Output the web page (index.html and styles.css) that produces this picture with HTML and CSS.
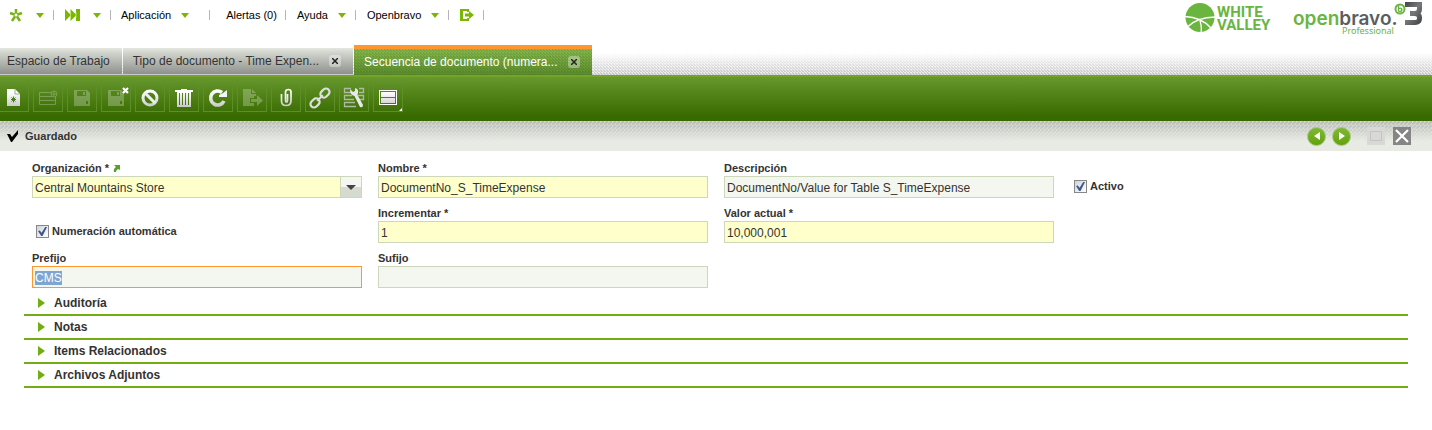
FILE: index.html
```html
<!DOCTYPE html>
<html lang="es">
<head>
  <meta charset="UTF-8" />
  <meta name="viewport" content="width=device-width, initial-scale=1.0"/>
  <title>Secuencia de documento - Openbravo</title>
  <link rel="stylesheet" href="styles.css">
</head>
<body>

  <svg class="defs" width="0" height="0" aria-hidden="true">
    <defs>
      <linearGradient id="metal" gradientUnits="userSpaceOnUse" x1="0" y1="1" x2="0" y2="21">
        <stop offset="0.2" stop-color="#ffffff"/>
        <stop offset="1" stop-color="#c4c4c4"/>
      </linearGradient>
      <linearGradient id="tres" x1="0" y1="0" x2="1" y2="1">
        <stop offset="0" stop-color="#4a4b4d"/>
        <stop offset="0.5" stop-color="#77787a"/>
        <stop offset="1" stop-color="#4a4b4d"/>
      </linearGradient>
    </defs>
  </svg>

  <header class="header">
    <nav class="menu">
      <button class="menu-item menu-item-icon" aria-label="Crear nuevo">
        <svg class="menu-icon" width="14" height="14" viewBox="0 0 14 14"><path d="M7 7V1M7 7L1 5M7 7L13 5M7 7L3 13M7 7L11 13" stroke="#7ab317" stroke-width="2.6" fill="none"/><circle cx="7" cy="7" r="1.500" fill="#fff"/></svg>
        <span class="arrow"></span>
      </button>
      <button class="menu-item menu-item-icon" aria-label="Inicio rápido">
        <svg class="menu-icon" width="15" height="14" viewBox="0 0 15 14"><path d="M0 1L5.500 6.500V1L11 6.500V1H15V13H11V7.500L5.500 13V7.500L0 13Z" fill="#7ab800"/><path d="M5.500 4V10M11 4V10" stroke="#cbe29a" stroke-width=".7"/></svg>
        <span class="arrow"></span>
      </button>
      <button class="menu-item menu-item-app">Aplicación <span class="arrow"></span></button>
      <button class="menu-item menu-item-alert">Alertas (0)</button>
      <button class="menu-item">Ayuda <span class="arrow"></span></button>
      <button class="menu-item">Openbravo <span class="arrow"></span></button>
      <button class="menu-item" aria-label="Salir">
        <svg class="menu-icon" width="14" height="14" viewBox="0 0 14 14"><path d="M0 1H9V4H7V3H3V11H7V10H9V13H0Z" fill="#7ab800"/><path d="M5 5.500H9V3L14 7L9 11V8.500H5Z" fill="#7ab800"/></svg>
      </button>
    </nav>

    <div class="logos">
      <svg width="86" height="34" viewBox="0 0 86 34" role="img" aria-label="White Valley">
        <circle cx="15" cy="17.500" r="14.500" fill="#69b53f"/>
        <path d="M0 16.500Q16 17 26 28M3 26.500Q12 17.500 30 17M15 21Q17 27 16 32" stroke="#fff" stroke-width="1.300" fill="none"/>
        <text class="logo-valley" x="32" y="17">WHITE</text>
        <text class="logo-valley" x="32" y="30">VALLEY</text>
      </svg>
      <svg width="132" height="36" viewBox="0 0 132 36" role="img" aria-label="Openbravo 3 Professional">
        <text class="logo-open" x="0" y="25">open<tspan class="logo-bravo">bravo.</tspan></text>
        <text class="logo-pro" x="49" y="34">Professional</text>
        <circle cx="107" cy="9" r="4.500" fill="none" stroke="#69b53f" stroke-width="2"/>
        <path d="M105.500 4V10.500Q106 12 107.500 11.500Q109.500 10.500 108.500 8.500Q107 7.500 105.500 9" fill="none" stroke="#69b53f" stroke-width="1.400"/>
        <path d="M112 4.500H126.500V9Q126.500 13 122 13.500H117M122 13.500Q126.500 14 126.500 17.500V18.500Q126.500 22.500 122 22.500H112" fill="none" stroke="url(#tres)" stroke-width="5"/>
      </svg>
    </div>
  </header>

  <div class="tabs">
    <button class="tab tab-home">Espacio de Trabajo</button>
    <div class="tab"><span>Tipo de documento - Time Expen...</span><button class="tab-close" aria-label="Cerrar"><svg width="6" height="6" viewBox="0 0 6 6"><path d="M0 0L6 6M6 0L0 6"/></svg></button></div>
    <div class="tab active"><span>Secuencia de documento (numera...</span><button class="tab-close" aria-label="Cerrar"><svg width="6" height="6" viewBox="0 0 6 6"><path d="M0 0L6 6M6 0L0 6"/></svg></button></div>
  </div>

  <div class="toolbar">
    <button class="tool" aria-label="Nuevo"><svg width="22" height="22" viewBox="0 0 22 22"><path d="M4 2H12L17 7V19H4Z" fill="url(#metal)"/><path d="M12 2V7H17" stroke="#99ad85" fill="none"/><path d="M10.500 9.500V15.500M8 12.500H13M8.500 14.500L12.500 10.500M8.500 10.500L12.500 14.500" stroke="#4b7d16" stroke-width="1"/></svg></button>
    <button class="tool disabled" aria-label="Nuevo en cuadrícula" disabled><svg width="22" height="22" viewBox="0 0 22 22"><path d="M14 5.500H2.500V17.500H18.500V10M2.500 9.500H15M2.500 13.500H18.500" stroke="#fff" fill="none"/><circle cx="17" cy="7" r="3" stroke="#fff" fill="none"/><path d="M17 5V9M15 7H19" stroke="#fff"/></svg></button>
    <button class="tool disabled" aria-label="Guardar" disabled><svg width="22" height="22" viewBox="0 0 22 22"><path fill-rule="evenodd" d="M3 3H16L19 6V19H3ZM6 4V9H15V4ZM12 5H14V8H12ZM15 14V17H17V14Z" fill="#fff"/></svg></button>
    <button class="tool disabled" aria-label="Guardar y cerrar" disabled><svg width="22" height="22" viewBox="0 0 22 22"><path fill-rule="evenodd" d="M3 3H16L19 6V19H3ZM6 4V9H15V4ZM12 5H14V8H12ZM15 14V17H17V14Z" fill="#fff"/></svg><svg class="mark" width="7" height="7" viewBox="0 0 7 7"><path d="M1 1L6 6M6 1L1 6" stroke="#fff" stroke-width="2.200"/></svg></button>
    <button class="tool" aria-label="Deshacer"><svg width="22" height="22" viewBox="0 0 22 22"><circle cx="11" cy="11" r="7" stroke="url(#metal)" stroke-width="3" fill="none"/><path d="M6 6L16 16" stroke="#eee" stroke-width="3"/></svg></button>
    <button class="tool" aria-label="Eliminar"><svg width="22" height="22" viewBox="0 0 22 22"><path fill-rule="evenodd" d="M8 2H14V3H20V5H18V20H4V5H2V3H8ZM6 6V18H7V6ZM9 6V18H10V6ZM12 6V18H13V6ZM15 6V18H16V6Z" fill="url(#metal)"/></svg></button>
    <button class="tool" aria-label="Refrescar"><svg width="22" height="22" viewBox="0 0 22 22"><path d="M17 14A7 7 0 1 1 15 5.500" stroke="url(#metal)" stroke-width="3.600" fill="none"/><path d="M20 3V10H12V8L16 6Z" fill="#f6f6f6"/></svg></button>
    <button class="tool disabled" aria-label="Exportar" disabled><svg width="22" height="22" viewBox="0 0 22 22"><path d="M2 2H10V7H15V9H13V11H9V16H13V19H2ZM11 2L15 6H11Z" fill="#fff"/><path d="M10 12H16V8L22 13.500L16 19V15H10Z" fill="#fff"/></svg></button>
    <button class="tool" aria-label="Adjuntar"><svg width="22" height="22" viewBox="0 0 22 22"><path d="M6.500 7V14Q6.500 18.500 11 18.500Q16 18.500 16 14V5Q16 2.500 13.500 2.500Q10.500 2.500 10.500 5V13Q10.500 15 11.500 15Q12.500 15 12.500 13V7" stroke="url(#metal)" stroke-width="1.700" fill="none"/></svg></button>
    <button class="tool" aria-label="Enlace"><svg width="22" height="22" viewBox="0 0 22 22"><g transform="rotate(-45 11 11)" fill="none" stroke="#dedede" stroke-width="2.200"><rect x="-1" y="7.500" width="10" height="7" rx="3.500"/><rect x="13" y="7.500" width="10" height="7" rx="3.500"/><path d="M7 11H15"/></g></svg></button>
    <button class="tool" aria-label="Auditoría"><svg width="22" height="22" viewBox="0 0 22 22"><path d="M8 1.500H1.500V5.500H8M16 1.500H20.500V5.500H16M9 8.500H1.500V12.500H11M15 8.500H20.500V12.500H16M12 15.500H1.500V19.500H13" stroke="#aebba0" fill="none" stroke-width="1.300"/><path d="M7 2L10 5L12 4V1Q16 2 15 6L14.500 8L20 18Q20 21 17 20L11.500 9Q7 8 7 2Z" fill="#e9e9e9"/></svg></button>
    <button class="tool" aria-label="Vista"><svg width="22" height="22" viewBox="0 0 22 22"><rect x="2.500" y="3.500" width="17" height="14" fill="none" stroke="#fff"/><path d="M4 5H18V10H4ZM4 11H18V16H4Z" fill="url(#metal)"/></svg><svg class="corner" width="3" height="3" viewBox="0 0 3 3"><path d="M3 0V3H0Z" fill="#fff"/></svg></button>
  </div>

  <div class="status">
    <svg width="12" height="12" viewBox="0 0 12 12"><path d="M0 4L3 4L5 7L11 0V4L5 12H4Z" fill="#000"/></svg>
    <span class="status-text">Guardado</span>
    <button class="nav" aria-label="Anterior"><svg width="6" height="8" viewBox="0 0 6 8"><path d="M6 0V8L0 4Z" fill="#fff"/></svg></button>
    <button class="nav" aria-label="Siguiente"><svg width="6" height="8" viewBox="0 0 6 8"><path d="M0 0V8L6 4Z" fill="#fff"/></svg></button>
    <button class="win win-max" aria-label="Maximizar" disabled><svg width="18" height="18" viewBox="0 0 18 18"><rect x="3.500" y="4.500" width="11" height="9" fill="none" stroke="#c4c4c2"/></svg></button>
    <button class="win" aria-label="Cerrar"><svg width="18" height="18" viewBox="0 0 18 18"><path d="M3 3L15 15M15 3L3 15" stroke="#fff" stroke-width="2.200"/></svg></button>
  </div>

  <form class="form">
    <div class="field">
      <label for="organizacion">Organización * <svg width="7" height="7" viewBox="0 0 7 7"><path d="M1 0H7V5L5 4Q3 5 3 7H1Q0 4 3 2Z" fill="#5a9e2f"/></svg></label>
      <div class="select">
        <select id="organizacion" class="input required">
          <option>Central Mountains Store</option>
        </select>
      </div>
    </div>
    <div class="field">
      <label for="nombre">Nombre *</label>
      <input type="text" id="nombre" class="input required" value="DocumentNo_S_TimeExpense" />
    </div>
    <div class="field">
      <label for="descripcion">Descripción</label>
      <input type="text" id="descripcion" class="input" value="DocumentNo/Value for Table S_TimeExpense" />
    </div>
    <div class="field check">
      <input type="checkbox" id="activo" checked />
      <label for="activo">Activo</label>
    </div>

    <div class="field check">
      <input type="checkbox" id="automatica" checked />
      <label for="automatica">Numeración automática</label>
    </div>
    <div class="field">
      <label for="incrementar">Incrementar *</label>
      <input type="text" id="incrementar" class="input required" value="1" />
    </div>
    <div class="field">
      <label for="valor">Valor actual *</label>
      <input type="text" id="valor" class="input required" value="10,000,001" />
    </div>

    <div class="field field-row">
      <label for="prefijo">Prefijo</label>
      <input type="text" id="prefijo" class="input" value="CMS" />
    </div>
    <div class="field">
      <label for="sufijo">Sufijo</label>
      <input type="text" id="sufijo" class="input" />
    </div>
  </form>

  <div class="sections">
    <button class="section">Auditoría</button>
    <button class="section">Notas</button>
    <button class="section">Items Relacionados</button>
    <button class="section">Archivos Adjuntos</button>
  </div>

  <script>
    document.getElementById('prefijo').focus();
    document.getElementById('prefijo').select();
  </script>

</body>
</html>
```

FILE: styles.css
```css
* {
  box-sizing: border-box;
}

body {
  font-family: "Liberation Sans", Arial, sans-serif;
  font-size: 12px;
  color: #333;
  background: #fff;
  margin: 0;
}

button {
  font: inherit;
  color: inherit;
  background: none;
  border: none;
  padding: 0;
  cursor: pointer;
}

svg {
  display: block;
  flex: none;
}

.defs {
  position: absolute;
}

/* menu */
.header {
  display: flex;
  justify-content: space-between;
  height: 45px;
  padding-right: 7px;
}

.menu {
  display: flex;
  align-items: center;
  height: 30px;
}

.menu-item {
  display: flex;
  align-items: center;
  gap: 10px;
  height: 10px;
  padding: 0 9px 0 11px;
  border-right: 1px solid #b5b5b5;
  font-size: 11px;
  color: #000;
  white-space: nowrap;
}

.menu-item-icon {
  gap: 13px;
}

.menu-item:first-child {
  padding-left: 9px;
}

.menu-item-app {
  padding: 0 20px 0 10px;
}

.menu-item-alert {
  padding: 0 8px 0 16px;
}

.arrow {
  border: 4px solid transparent;
  border-top: 5px solid #7ab800;
  border-bottom: none;
}

.logos {
  display: flex;
  gap: 22px;
}

.logo-valley {
  font: bold 15px Roboto, sans-serif;
  fill: #69b53f;
}

.logo-open {
  font: 600 19px Inter, sans-serif;
  fill: #69b53f;
}

.logo-bravo {
  fill: #5c5d60;
}

.logo-pro {
  font: 9px "Noto Sans", sans-serif;
  fill: #69b53f;
}

/* tabs */
.tabs {
  display: flex;
  align-items: flex-end;
  gap: 1px;
  height: 30px;
  background:
    linear-gradient(#fff 8px, rgba(255, 255, 255, 0.1)),
    linear-gradient(45deg, #e6e6e6 33%, #c0c0c0 33% 66%, #e6e6e6 66%) 0 0 / 3px 3px;
}

.tab {
  display: flex;
  align-items: center;
  gap: 10px;
  height: 27px;
  padding: 0 12px 0 10px;
  border-bottom: 1px solid #c9c9cf;
  background: linear-gradient(#e4e6e0, #d0d3cb 20%, #8e918c);
  white-space: nowrap;
}

.tab-home {
  padding: 0 12px 0 7px;
}

.tab.active {
  height: 30px;
  border-top: 4px solid #ff962e;
  border-bottom: none;
  background:
    linear-gradient(45deg, transparent 33%, rgba(50, 90, 20, 0.2) 33% 66%, transparent 66%) 0 0 / 3px 3px,
    linear-gradient(#8aba4f, #5c8c2c);
  color: #fff;
}

.tab-close {
  display: flex;
  align-items: center;
  justify-content: center;
  width: 12px;
  height: 12px;
  border-radius: 3px;
  background: rgba(255, 255, 255, 0.35);
}

.tab-close path {
  stroke: #222;
  stroke-width: 1.5;
}

/* toolbar */
.toolbar {
  display: flex;
  align-items: center;
  gap: 4px;
  height: 46px;
  margin-left: -1px;
  padding-bottom: 2px;
  border-top: 2px solid #71a427;
  background: linear-gradient(#67972d, #376a00 90%);
}

.tool {
  position: relative;
  display: flex;
  align-items: center;
  justify-content: center;
  width: 30px;
  height: 28px;
  border: 1px solid #5d8f28;
}

.tool.disabled > svg:first-child {
  opacity: 0.25;
}

.mark {
  position: absolute;
  top: 2px;
  right: 1px;
}

.corner {
  position: absolute;
  right: 0;
  bottom: 0;
}

/* status bar */
.status {
  display: flex;
  align-items: center;
  height: 30px;
  padding: 0 21px 0 7px;
  background:
    linear-gradient(rgba(232, 234, 228, 0), #e8eae4 20px),
    linear-gradient(135deg, #d0d3cd 33%, #b9bdb6 33% 66%, #d0d3cd 66%) 0 0 / 4px 4px;
}

.status-text {
  flex: 1;
  margin-left: 6px;
  font-size: 11px;
  font-weight: bold;
}

.nav {
  display: flex;
  align-items: center;
  justify-content: center;
  width: 19px;
  height: 19px;
  margin-right: 6px;
  border: 1px solid #a3c37e;
  border-radius: 50%;
  background: linear-gradient(#7fb935, #62a30a);
}

.win {
  width: 18px;
  height: 18px;
  background: #858585;
}

.win-max {
  margin: 0 8px 0 10px;
  background: #d8d9d6;
}

/* form */
.form {
  display: grid;
  grid-template-columns: repeat(4, 1fr);
  row-gap: 8px;
  padding: 10px 24px 0;
}

.field {
  padding: 0 8px;
}

.field-row {
  grid-column: 1;
}

label {
  display: flex;
  align-items: center;
  gap: 4px;
  height: 15px;
  padding-bottom: 1px;
  font-size: 11px;
  font-weight: bold;
}

.input {
  display: block;
  width: 100%;
  height: 22px;
  padding: 2px 2px 0;
  border: 1px solid #cdd7bb;
  border-radius: 0;
  outline: none;
  background: #f3f7f0;
  color: #333;
  font: 12px "Liberation Sans", Arial, sans-serif;
}

.input.required {
  background: #ffffcc;
}

.input:focus {
  border-color: #ff962e;
}

.input::selection {
  background: #7fa6d3;
  color: #fff;
}

.select {
  position: relative;
}

.select .input {
  appearance: none;
}

.select::before {
  content: "";
  position: absolute;
  top: 1px;
  right: 1px;
  width: 20px;
  height: 20px;
  border-left: 1px solid #cdd7bb;
  background: linear-gradient(#f4f6f2 50%, #d6dbd0 50%);
  pointer-events: none;
}

.select::after {
  content: "";
  position: absolute;
  top: 9px;
  right: 6px;
  border: 5px solid transparent;
  border-top-color: #444;
  border-bottom: none;
  pointer-events: none;
}

.check {
  display: flex;
  align-items: center;
  gap: 3px;
  padding: 14px 12px 0;
}

.check input {
  appearance: none;
  position: relative;
  width: 13px;
  height: 13px;
  margin: 0;
  border: 1px solid #888;
  background: linear-gradient(135deg, #cfd3dc, #fff);
}

.check input:checked::before {
  content: "";
  position: absolute;
  top: 1px;
  left: 1px;
  width: 9px;
  height: 9px;
  background: #3f5791;
  clip-path: polygon(0 45%, 20% 40%, 40% 65%, 80% 0, 100% 0, 50% 100%, 35% 100%);
}

/* sections */
.sections {
  margin: 4px 24px 0;
}

.section {
  display: flex;
  align-items: center;
  gap: 9px;
  width: 100%;
  height: 24px;
  padding-left: 14px;
  border-bottom: 2px solid #73ad12;
  font-weight: bold;
}

.section::before {
  content: "";
  border: 5px solid transparent;
  border-left: 7px solid #73ad12;
  border-right: none;
}
```
